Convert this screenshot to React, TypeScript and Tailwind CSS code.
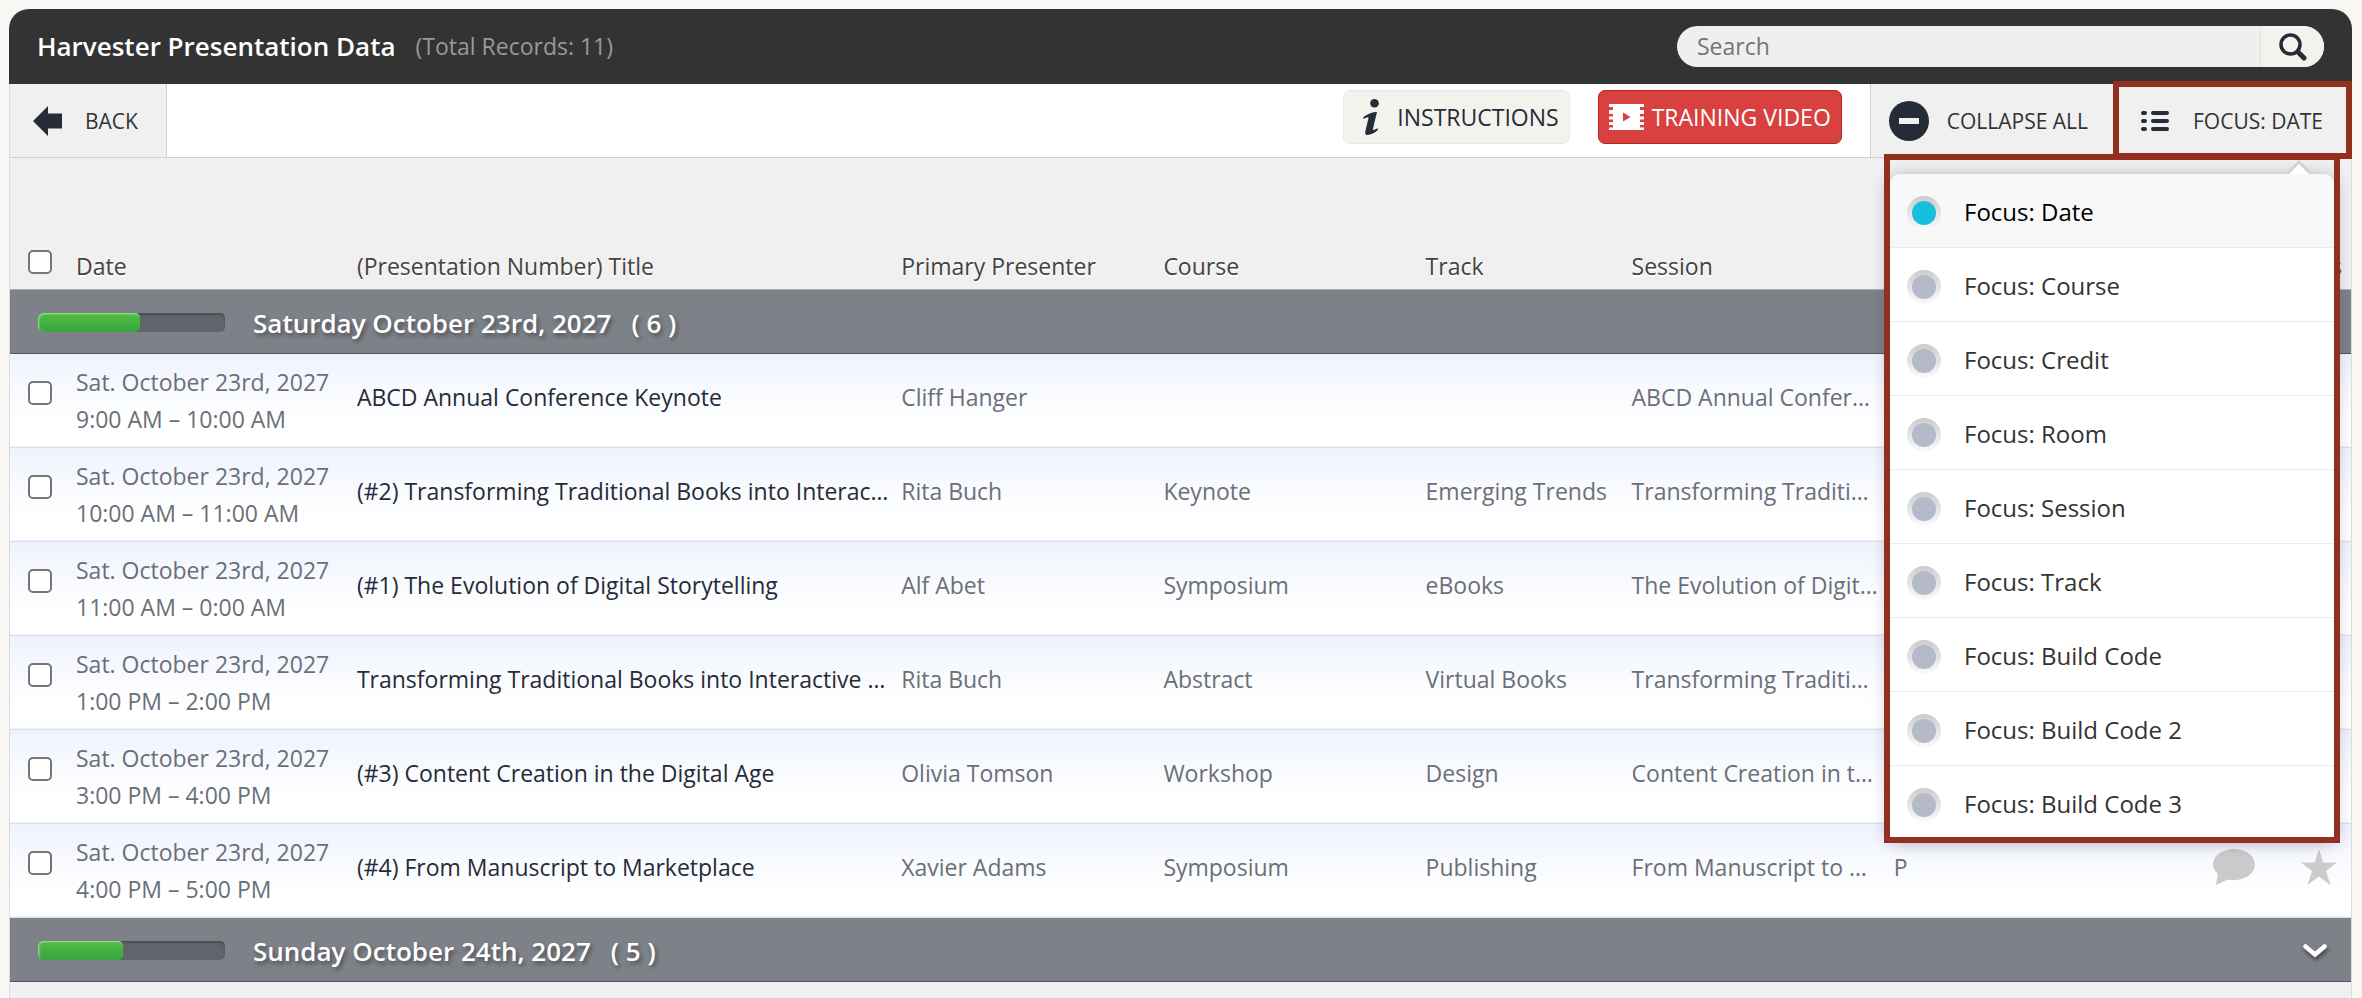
import { useState } from "react";

type Row = {
  time: string;
  title: string;
  presenter: string;
  course: string;
  track: string;
  session: string;
  room: string;
};

const rows: Row[] = [
  { time: "9:00 AM – 10:00 AM", title: "ABCD Annual Conference Keynote", presenter: "Cliff Hanger", course: "", track: "", session: "ABCD Annual Confer…", room: "" },
  { time: "10:00 AM – 11:00 AM", title: "(#2) Transforming Traditional Books into Interac…", presenter: "Rita Buch", course: "Keynote", track: "Emerging Trends", session: "Transforming Traditi…", room: "" },
  { time: "11:00 AM – 0:00 AM", title: "(#1) The Evolution of Digital Storytelling", presenter: "Alf Abet", course: "Symposium", track: "eBooks", session: "The Evolution of Digit…", room: "" },
  { time: "1:00 PM – 2:00 PM", title: "Transforming Traditional Books into Interactive …", presenter: "Rita Buch", course: "Abstract", track: "Virtual Books", session: "Transforming Traditi…", room: "" },
  { time: "3:00 PM – 4:00 PM", title: "(#3) Content Creation in the Digital Age", presenter: "Olivia Tomson", course: "Workshop", track: "Design", session: "Content Creation in t…", room: "" },
  { time: "4:00 PM – 5:00 PM", title: "(#4) From Manuscript to Marketplace", presenter: "Xavier Adams", course: "Symposium", track: "Publishing", session: "From Manuscript to …", room: "P" },
];

const focusOptions = ["Date", "Course", "Credit", "Room", "Session", "Track", "Build Code", "Build Code 2", "Build Code 3"];

const checkboxClass =
  "block w-6 h-6 appearance-none rounded-[5px] border-2 border-[#767676] bg-white checked:bg-[#17bfdc]";

function GroupRow({ label, count, total }: { label: string; count: number; total: number }) {
  return (
    <tr className="h-16 bg-[#7e8288] border-t border-[#a9b0b6] border-b border-b-[#4f565d]">
      <th colSpan={9} scope="colgroup" className="pt-[3px] pl-7 pr-6 text-left font-normal">
        <div className="flex items-center">
          <div className="w-[187px] h-[19px] rounded-[5px] bg-[#60646b] shadow-[inset_0_2px_2px_#4b4e53] overflow-hidden">
            <div
              className="h-full rounded-[5px] bg-linear-to-b from-[#52bd45] to-[#36a43f] shadow-[inset_1px_1px_2px_#9be894]"
              style={{ width: `${(count / total) * 100}%` }}
            />
          </div>
          <div className="ml-7 flex flex-1 gap-5 text-[26px] leading-8 font-semibold text-white [text-shadow:2px_3px_4px_rgba(0,0,0,0.4)]">
            <span>{label}</span>
            <span>( {count} )</span>
          </div>
          <button aria-label="Toggle group" className="drop-shadow-[1px_3px_2px_rgba(0,0,0,0.5)]">
            <svg width="24" height="14" viewBox="0 0 24 14" fill="none" stroke="#fff" strokeWidth="4.5" strokeLinecap="round">
              <path d="M2.5 2.5 12 10.5 21.5 2.5" />
            </svg>
          </button>
        </div>
      </th>
    </tr>
  );
}

function DataRow({ row }: { row: Row }) {
  return (
    <tr className="h-[94px] bg-linear-to-b from-[#edf2fe] via-[#f8fafe] via-40% to-white to-75% border-b border-[#dfe1e6] text-[23px] whitespace-nowrap text-[#6b6f78]">
      <td className="pl-[18px] pb-[14px]">
        <input type="checkbox" aria-label={`Select ${row.title}`} className={checkboxClass} />
      </td>
      <td className="pt-[2px] leading-[37px]">
        Sat. October 23rd, 2027
        <br />
        {row.time}
      </td>
      <td className="pb-[6px] text-[#262b38]">{row.title}</td>
      <td className="pb-[6px]">{row.presenter}</td>
      <td className="pb-[6px]">{row.course}</td>
      <td className="pb-[6px]">{row.track}</td>
      <td className="pb-[6px]">{row.session}</td>
      <td className="pb-[6px]">{row.room}</td>
      <td className="pb-[6px] pr-[14px]">
        <div className="flex items-center justify-end gap-[46px]">
          <button aria-label="Comment">
            <svg width="42" height="36" viewBox="0 0 42 36" fill="#cbcbcb">
              <path d="M21 0C32.600 0 42 7 42 15.500S32.600 31 21 31c-2 0-4-.2-5.800-.6L3 36l1.800-11.500C1.800 22 0 19 0 15.500 0 7 9.400 0 21 0Z" />
            </svg>
          </button>
          <button aria-label="Favourite">
            <svg width="36" height="36" viewBox="0 0 36 36" fill="#cbcbcb">
              <path d="M18 0 22.300 13.500H36L25 22l4.500 14L18 27.500 6.500 36 11 22 0 13.500H13.700Z" />
            </svg>
          </button>
        </div>
      </td>
    </tr>
  );
}

function FocusMenu({ value, onChange }: { value: string; onChange: (value: string) => void }) {
  return (
    <div className="absolute top-[70px] right-[11px] z-10 w-[456px] h-[689px] p-[6px] pt-5">
      <div className="relative h-full rounded-t-[10px] overflow-hidden bg-white shadow-[0_4px_18px_rgba(0,0,0,0.35)]">
        {focusOptions.map((option) => (
          <label
            key={option}
            className="flex h-[74px] items-center gap-[23px] border-b border-[#ebebeb] pl-[17px] text-2xl text-[#333] has-checked:bg-[#f8f8f8] has-checked:text-black"
          >
            <span className="mt-1 rounded-full bg-linear-to-b from-[#cccccc] to-[#fbfbfb] p-[5px]">
              <input
                type="radio"
                name="focus"
                checked={option === value}
                onChange={() => onChange(option)}
                className="block w-6 h-6 appearance-none rounded-full bg-[#b4bac9] checked:bg-[#17bfdc]"
              />
            </span>
            <span className="pt-[2px]">Focus: {option}</span>
          </label>
        ))}
      </div>
      <svg className="absolute top-[6px] right-6" width="34" height="14" viewBox="0 0 34 14" fill="#fff" stroke="#d2d2d2" strokeWidth="3">
        <path d="M1 18 17 2 33 18" />
      </svg>
      <div className="pointer-events-none absolute inset-0 border-[6px] border-[#932f1f]" />
    </div>
  );
}

export default function App() {
  const [focus, setFocus] = useState("Date");

  return (
    <div className="flex min-h-screen flex-col bg-[#f8f7f3] pt-[9px] pr-[10px] pl-[9px] font-['Open_Sans',sans-serif] text-2xl">
      <header className="flex h-[75px] items-center justify-between rounded-t-[20px] bg-[#333] px-7">
        <div className="flex items-center gap-5">
          <h1 className="text-[26px] font-semibold text-white">Harvester Presentation Data</h1>
          <span className="text-[23px] text-[#999]">(Total Records: 11)</span>
        </div>
        <form className="flex h-[41px] w-[647px] overflow-hidden rounded-full bg-[#efefef]" onSubmit={(e) => e.preventDefault()}>
          <input type="search" aria-label="Search" placeholder="Search" className="min-w-0 flex-1 pl-5 text-[23px] outline-none placeholder:text-[#757575]" />
          <button aria-label="Submit search" className="flex w-16 items-center justify-center border-l border-[#e5e4dc] bg-[#f3f2ec]">
            <svg width="28" height="28" viewBox="0 0 28 28" fill="none" stroke="#262b38" strokeLinecap="round">
              <circle cx="11.500" cy="11.500" r="9.500" strokeWidth="3.500" />
              <path d="M19 19l6 6" strokeWidth="5" />
            </svg>
          </button>
        </form>
      </header>

      <main className="flex-1 border-x border-[#dcdcdc] bg-[#f0f0f0]">
        <div className="flex h-[74px] border-b border-[#d0d0d0] bg-white text-[21px] font-medium text-[#333]">
          <button className="flex items-center gap-[23px] border-r border-[#d0d0d0] bg-[#f0f0f0] pl-[23px] pr-7">
            <svg width="29" height="30" viewBox="0 0 29 30" fill="#262b38">
              <path d="M0 15 15 0v7.500h14v15H15V30Z" />
            </svg>
            BACK
          </button>
          <div className="flex flex-1 items-start justify-end gap-7 pt-[6px] pr-7 text-[23px]">
            <button className="flex h-[54px] items-center gap-[18px] rounded-[7px] border border-[#e8e7e0] bg-[#f3f2ec] pl-[19px] pr-[10px] text-[#262b38]">
              <svg width="16" height="36" viewBox="0 0 16 36" fill="#262b38">
                <circle cx="11.500" cy="4.300" r="4.300" />
                <path d="M0 18.500C4 15 9 13 14 13L10 29.500c-.4 1.800.5 2 4.500-.2l.5 1.500C12 34 7.500 36 4.500 36 2.500 36 1.800 34.500 2.400 32L5.500 19c.3-1.300-1.500-.8-5 .8Z" />
              </svg>
              INSTRUCTIONS
            </button>
            <button className="flex h-[54px] items-center gap-2 rounded-[7px] border border-[#b8221f] bg-[#d8413f] px-[10px] text-white">
              <svg width="35" height="26" viewBox="0 0 35 26">
                <path fill="#fff" d="M0 0h35v3h-4v3h4v4h-4v2.500h4v3h-4v2.500h4v3h-4v2.500h4V26H0v-2.500h4V21H0v-3h4v-2.500H0v-3h4V10H0V6h4V3H0Z" />
                <path fill="#d8413f" d="M14 8.500 21.500 13 14 17.500Z" />
              </svg>
              TRAINING VIDEO
            </button>
          </div>
          <button className="flex items-center gap-[18px] border-l border-[#d0d0d0] bg-[#f0f0f0] pl-[18px] pr-[25px]">
            <svg width="40" height="40" viewBox="0 0 40 40">
              <circle cx="20" cy="20" r="20" fill="#262b38" />
              <path fill="#f0f0f0" d="M10 17h20v6H10z" />
            </svg>
            COLLAPSE ALL
          </button>
          <div className="relative flex bg-[#f0f0f0]">
            <button className="flex items-center gap-6 pl-7 pr-7" aria-haspopup="true" aria-expanded="true">
              <svg width="28" height="20" viewBox="0 0 28 20" stroke="#262b38" strokeWidth="4" strokeLinecap="round">
                <path d="M2 2h2M12 2h14M2 10h2M12 10h14M2 18h2M12 18h14" />
              </svg>
              FOCUS: {focus.toUpperCase()}
            </button>
            <div className="pointer-events-none absolute -top-[3px] -bottom-[2px] left-0 -right-px z-20 border-[6px] border-[#932f1f]" />
            <FocusMenu value={focus} onChange={setFocus} />
          </div>
        </div>

        <table className="w-full table-fixed border-collapse">
          <colgroup>
            <col className="w-[66px]" />
            <col className="w-[12%]" />
            <col className="w-[23.25%]" />
            <col className="w-[11.2%]" />
            <col className="w-[11.2%]" />
            <col className="w-[8.8%]" />
            <col className="w-[11.2%]" />
            <col />
            <col className="w-[176px]" />
          </colgroup>
          <thead>
            <tr className="h-[131px] align-bottom text-left text-[23px] text-[#444] [text-shadow:0_2px_0_#fff]">
              <th className="pl-[18px] pb-[15px]">
                <input type="checkbox" aria-label="Select all" className={checkboxClass} />
              </th>
              <th className="pb-[7px] font-medium">Date</th>
              <th className="pb-[7px] font-medium">(Presentation Number) Title</th>
              <th className="pb-[7px] font-medium">Primary Presenter</th>
              <th className="pb-[7px] font-medium">Course</th>
              <th className="pb-[7px] font-medium">Track</th>
              <th className="pb-[7px] font-medium">Session</th>
              <th className="pb-[7px] font-medium">Room</th>
              <th className="pb-[7px] pr-[9px] text-right font-medium">Actions</th>
            </tr>
          </thead>
          <tbody>
            <GroupRow label="Saturday October 23rd, 2027" count={6} total={11} />
            {rows.map((row) => (
              <DataRow key={row.time} row={row} />
            ))}
            <GroupRow label="Sunday October 24th, 2027" count={5} total={11} />
          </tbody>
        </table>
      </main>
    </div>
  );
}
